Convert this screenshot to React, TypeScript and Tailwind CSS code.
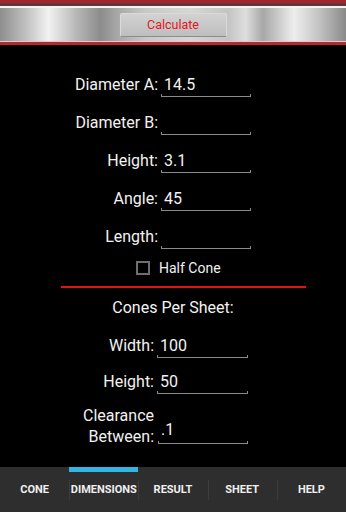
import React from 'react';

interface FieldProps {
  label: string;
  value?: string;
  labelWidth: number;
}

function Underline() {
  return (
    <>
      <div className="absolute bottom-0 left-0 right-0 h-[1px] bg-[#8a8a8a]"></div>
      <div className="absolute bottom-0 left-0 w-[1px] h-[3px] bg-[#8a8a8a]"></div>
      <div className="absolute bottom-0 right-0 w-[1px] h-[3px] bg-[#8a8a8a]"></div>
    </>
  );
}

function Field({ label, value, labelWidth }: FieldProps) {
  return (
    <div className="flex items-end h-[38px]">
      <div className="text-right pr-[3px] mb-[2px] leading-[20px] whitespace-nowrap" style={{ width: labelWidth }}>
        {label}
      </div>
      <div className="relative w-[90px] pb-[2px]">
        <div className="leading-[20px] pl-[3px] h-[20px]">{value}</div>
        <Underline />
      </div>
    </div>
  );
}

export default function App() {
  const tabs = ['CONE', 'DIMENSIONS', 'RESULT', 'SHEET', 'HELP'];

  return (
    <div className="w-[346px] h-[512px] bg-black text-[#f2f2f2] flex flex-col overflow-hidden text-[16px]" style={{ fontFamily: 'Roboto, "Liberation Sans", sans-serif' }}>
      {/* header bar */}
      <div className="flex flex-col h-[45px] shrink-0">
        <div className="h-[3px] bg-[#a82428]"></div>
        <div className="h-[3px] bg-[#5c3840]"></div>
        <div className="h-[2px] bg-[#f4f4f4]"></div>
        <div className="h-[33px] flex items-center justify-center bg-[linear-gradient(90deg,#8e8e8e_0%,#c4c4c4_8%,#f2f2f2_14%,#b8b8b8_22%,#8c8c8c_29%,#a8a8a8_34%,#c8c8c8_42%,#d6d6d6_55%,#c4c4c4_66%,#dedede_71%,#a8a8a8_76%,#eeeeee_85%,#c4c4c4_92%,#8a8a8a_100%)]">
          <div className="w-[107px] h-[24px] mt-[1px] flex items-center justify-center bg-[linear-gradient(180deg,#d2d2d2,#bebebe)] border border-[#dadada] border-b-[#8c8c8c] rounded-[2px] text-[#e4161e] text-[12.5px]">
            Calculate
          </div>
        </div>
        <div className="h-[1px] bg-[#e6c8c8]"></div>
        <div className="h-[3px] bg-[#b02a30]"></div>
      </div>

      {/* form */}
      <div className="flex flex-col pt-[14px]">
        <Field label="Diameter A:" value="14.5" labelWidth={161} />
        <Field label="Diameter B:" labelWidth={161} />
        <Field label="Height:" value="3.1" labelWidth={161} />
        <Field label="Angle:" value="45" labelWidth={161} />
        <Field label="Length:" labelWidth={161} />

        <div className="flex items-center mt-[12px] pl-[136px] h-[14px]">
          <div className="w-[14px] h-[14px] border-2 border-[#6e6e6e]"></div>
          <span className="ml-[9px] text-[14px] leading-[14px]">Half Cone</span>
        </div>

        <div className="mt-[11px] ml-[61px] w-[245px] h-[2px] bg-[#e01414]"></div>

        <div className="mt-[10px] text-center leading-[20px]">Cones Per Sheet:</div>

        <div className="flex items-end h-[40px]">
          <div className="w-[157px] text-right pr-[3px] mb-[2px] leading-[20px]">Width:</div>
          <div className="relative w-[91px] pb-[2px]">
            <div className="leading-[20px] pl-[3px] h-[20px]">100</div>
            <Underline />
          </div>
        </div>
        <div className="flex items-end h-[36px]">
          <div className="w-[157px] text-right pr-[3px] mb-[2px] leading-[20px]">Height:</div>
          <div className="relative w-[91px] pb-[2px]">
            <div className="leading-[20px] pl-[3px] h-[20px]">50</div>
            <Underline />
          </div>
        </div>
        <div className="flex items-start mt-[11px]">
          <div className="w-[158px] text-right pr-[4px] leading-[21px]">
            Clearance
            <br />
            Between:
          </div>
          <div className="relative w-[90px] pb-[4px] mt-[15px]">
            <div className="leading-[20px] pl-[3px] h-[20px]">.1</div>
            <Underline />
          </div>
        </div>
      </div>

      {/* tab bar */}
      <div className="mt-auto h-[45px] bg-[#2e2e2e] flex shrink-0">
        {tabs.map((tab, i) => (
          <div key={tab} className="relative flex-1 flex items-center justify-center">
            {i === 1 && <div className="absolute top-0 left-0 right-0 h-[5px] bg-[#33b5e5]"></div>}
            {i > 0 && <div className="absolute left-0 top-[13px] bottom-[12px] w-[1px] bg-[#3c3c3c]"></div>}
            <span className="text-[11px] font-bold text-[#f0f0f0] mt-[2px]">{tab}</span>
          </div>
        ))}
      </div>
    </div>
  );
}
